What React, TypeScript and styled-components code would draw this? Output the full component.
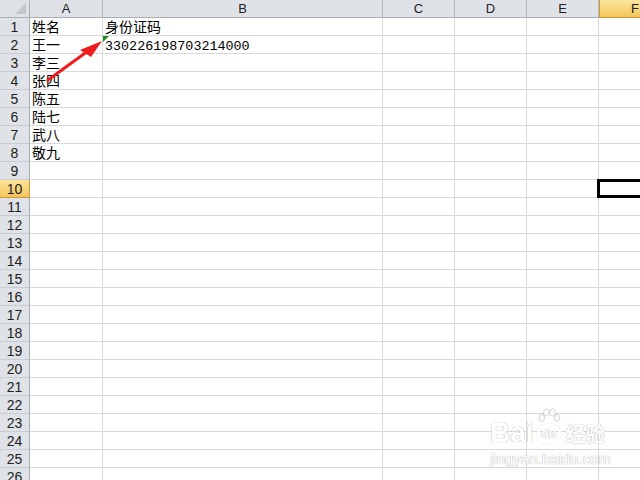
import React from "react";
import styled, { createGlobalStyle, css } from "styled-components";

const Global = createGlobalStyle`
  html, body { margin: 0; padding: 0; background: #fff; }
  body { width: 640px; height: 480px; overflow: hidden; font-family: "Noto Sans CJK SC", "Liberation Sans", sans-serif; }
  #root { width: 640px; height: 480px; overflow: hidden; }
`;

const Sheet = styled.div`
  position: relative;
  width: 640px;
  height: 480px;
  overflow: hidden;
  background: #fff;
`;

const Grid = styled.div`
  display: grid;
  grid-template-columns: 30px 73px 280px 72px 72px 72px 72px;
  grid-auto-rows: 18px;
`;

const HeaderBase = css`
  box-sizing: border-box;
  background: #dfe3e8;
  color: #222;
  font-family: "Liberation Sans", "DejaVu Sans", sans-serif;
  font-size: 13px;
  display: flex;
  align-items: center;
  justify-content: center;
  line-height: 14px;
`;

const Corner = styled.div`
  ${HeaderBase};
  position: relative;
  border-right: 1px solid #a9aeb5;
  border-bottom: 1px solid #a9aeb5;
  &::after {
    content: "";
    position: absolute;
    right: 3px;
    bottom: 3px;
    width: 0;
    height: 0;
    border-left: 11px solid transparent;
    border-bottom: 11px solid #c3c7cc;
  }
`;

const ColHead = styled.div<{ $active?: boolean }>`
  ${HeaderBase};
  border-right: 1px solid #b4b9c0;
  border-bottom: 1px solid #a9aeb5;
  ${(p) =>
    p.$active &&
    css`
      background: linear-gradient(#fbe49c, #f3c65c);
      border-right-color: #c99a3e;
      border-bottom-color: #c99a3e;
      border-left: 1px solid #c99a3e;
    `}
`;

const RowHead = styled.div<{ $active?: boolean }>`
  ${HeaderBase};
  font-size: 14px;
  border-right: 1px solid #a9aeb5;
  border-bottom: 1px solid #c9cdd3;
  ${(p) =>
    p.$active &&
    css`
      background: linear-gradient(#fbe49c, #f3c65c);
      border-bottom-color: #c99a3e;
      border-right-color: #c99a3e;
    `}
`;

const Cell = styled.div`
  position: relative;
  box-sizing: border-box;
  border-right: 1px solid #d9d9d9;
  border-bottom: 1px solid #d9d9d9;
  font-family: "Noto Sans CJK SC", sans-serif;
  font-size: 14px;
  line-height: 17px;
  color: #000;
  padding-left: 2px;
  white-space: nowrap;
`;

const NumText = styled.span`
  font-family: "Liberation Mono", monospace;
  font-size: 13.4px;
`;

const ErrorFlag = styled.span`
  position: absolute;
  left: 0;
  top: 0;
  width: 0;
  height: 0;
  border-top: 6px solid #1d8a1d;
  border-right: 6px solid transparent;
`;

const Selection = styled.div`
  position: absolute;
  left: 597px;
  top: 179px;
  width: 60px;
  height: 19px;
  box-sizing: border-box;
  border: 3px solid #000;
`;

const Overlay = styled.svg`
  position: absolute;
  left: 0;
  top: 0;
  pointer-events: none;
`;

const Watermark = styled.div`
  position: absolute;
  left: 490px;
  top: 408px;
  width: 130px;
  color: #fff;
  text-shadow: 0 0 1px #b8b8b8, 0 0 1px #b8b8b8;
  font-family: "Liberation Sans", "Noto Sans CJK SC", sans-serif;
`;

const MarkTop = styled.div`
  display: flex;
  align-items: flex-end;
  height: 38px;
`;

const Bai = styled.span`
  font-size: 28px;
  font-weight: bold;
  line-height: 26px;
`;

const Paw = styled.div`
  width: 30px;
  height: 38px;
  display: flex;
  flex-direction: column;
  align-items: center;
  justify-content: flex-end;
`;

const Du = styled.span`
  font-size: 13px;
  font-weight: bold;
  line-height: 16px;
  border: 2px solid #fff;
  box-shadow: 0 0 1px #b8b8b8;
  border-radius: 9px;
  padding: 0 2px;
  margin-bottom: 2px;
`;

const JingYan = styled.span`
  font-family: "Noto Sans CJK SC", sans-serif;
  font-size: 20px;
  font-weight: bold;
  line-height: 24px;
  margin-left: 2px;
`;

const Url = styled.div`
  font-size: 15px;
  line-height: 18px;
  margin-top: 4px;
`;

const cols = ["A", "B", "C", "D", "E", "F"];
const data: Record<number, [string, string]> = {
  1: ["姓名", "身份证码"],
  2: ["王一", ""],
  3: ["李三", ""],
  4: ["张四", ""],
  5: ["陈五", ""],
  6: ["陆七", ""],
  7: ["武八", ""],
  8: ["敬九", ""],
};

export default function App() {
  const rows = Array.from({ length: 26 }, (_, i) => i + 1);
  return (
    <Sheet>
      <Global />
      <Grid>
        <Corner />
        {cols.map((c) => (
          <ColHead key={c} $active={c === "F"}>
            {c}
          </ColHead>
        ))}
        {rows.map((r) => (
          <React.Fragment key={r}>
            <RowHead $active={r === 10}>{r}</RowHead>
            <Cell>{data[r]?.[0] ?? ""}</Cell>
            <Cell>
              {r === 2 ? (
                <>
                  <ErrorFlag />
                  <NumText>330226198703214000</NumText>
                </>
              ) : (
                data[r]?.[1] ?? ""
              )}
            </Cell>
            <Cell />
            <Cell />
            <Cell />
            <Cell />
          </React.Fragment>
        ))}
      </Grid>
      <Selection />
      <Overlay width="640" height="480" viewBox="0 0 640 480">
        <line x1="48" y1="80" x2="88" y2="51" stroke="#ee1c1c" strokeWidth="3" strokeLinecap="round" />
        <polygon points="102,41 80,50 91,57" fill="#ee1c1c" />
      </Overlay>
      <Watermark>
        <MarkTop>
          <Bai>Bai</Bai>
          <Paw>
            <svg width="30" height="18" viewBox="0 0 30 18">
              <g fill="#fff" stroke="#c0c0c0" strokeWidth="0.8">
                <ellipse cx="7" cy="11" rx="3" ry="4" />
                <ellipse cx="12" cy="5" rx="3" ry="4" />
                <ellipse cx="19" cy="5" rx="3" ry="4" />
                <ellipse cx="24" cy="11" rx="3" ry="4" />
              </g>
            </svg>
            <Du>du</Du>
          </Paw>
          <JingYan>经验</JingYan>
        </MarkTop>
        <Url>jingyan.baidu.com</Url>
      </Watermark>
    </Sheet>
  );
}
